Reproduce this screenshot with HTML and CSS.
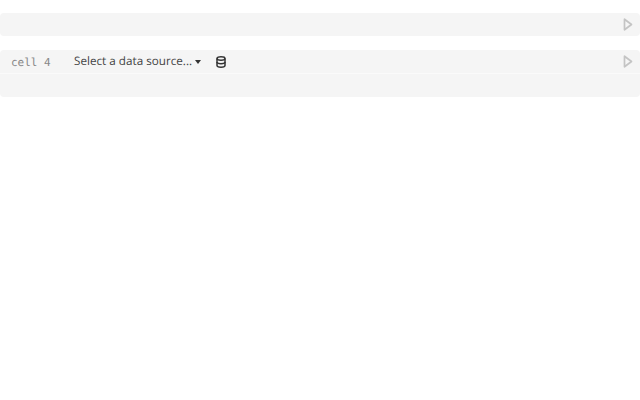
FILE: index.html
```
<!DOCTYPE html>
<html>
<head>
<meta charset="utf-8">
<link rel="stylesheet" href="styles.css">
</head>
<body>
<div class="cell">
  <div class="row row-empty">
    <svg class="run" width="10" height="13" viewBox="0 0 10 13"><path d="M1.5 1.2 L8.5 6.5 L1.5 11.8 Z" fill="none" stroke="#c4c4c4" stroke-width="1.7" stroke-linejoin="round"/></svg>
  </div>
</div>
<div class="cell">
  <div class="row row-head">
    <span class="label">cell 4</span>
    <span class="source">Select a data source...</span>
    <span class="caret"></span>
    <svg class="db" width="10" height="12" viewBox="0 0 10 12"><g fill="none" stroke="#333" stroke-width="1.5"><ellipse cx="5" cy="2.5" rx="4" ry="1.7"/><path d="M1 2.5 V9.5 C1 10.5 3 11.2 5 11.2 C7 11.2 9 10.5 9 9.5 V2.5"/><path d="M1 6 C1 7 3 7.7 5 7.7 C7 7.7 9 7 9 6"/></g></svg>
    <svg class="run" width="10" height="13" viewBox="0 0 10 13"><path d="M1.5 1.2 L8.5 6.5 L1.5 11.8 Z" fill="none" stroke="#c4c4c4" stroke-width="1.7" stroke-linejoin="round"/></svg>
  </div>
  <div class="row-body"></div>
</div>
</body>
</html>
```
FILE: styles.css
```
html, body {
  margin: 0;
  padding: 0;
  background: #fff;
}
body {
  padding-top: 13px;
  display: flex;
  flex-direction: column;
  gap: 14px;
  text-rendering: geometricPrecision;
}
.cell {
  background: #f5f5f5;
  border-radius: 4px;
}
.row {
  display: flex;
  align-items: center;
  height: 23px;
  padding: 0 7px 0 11px;
}
.row-head {
  height: 23px;
  border-bottom: 1px solid #fafafa;
}
.label {
  font: 11px/1 "DejaVu Sans Mono", monospace;
  color: #888;
  width: 63px;
  padding-top: 1px;
}
.source {
  font: 11.7px/1 "Open Sans", sans-serif;
  color: #444;
  padding-top: 1px;
}
.caret {
  width: 0;
  height: 0;
  margin-left: 3px;
  border-left: 3px solid transparent;
  border-right: 3px solid transparent;
  border-top: 4px solid #333;
}
.db {
  margin-left: 15px;
}
.run {
  margin-left: auto;
}
.row-body {
  height: 23px;
}
```
